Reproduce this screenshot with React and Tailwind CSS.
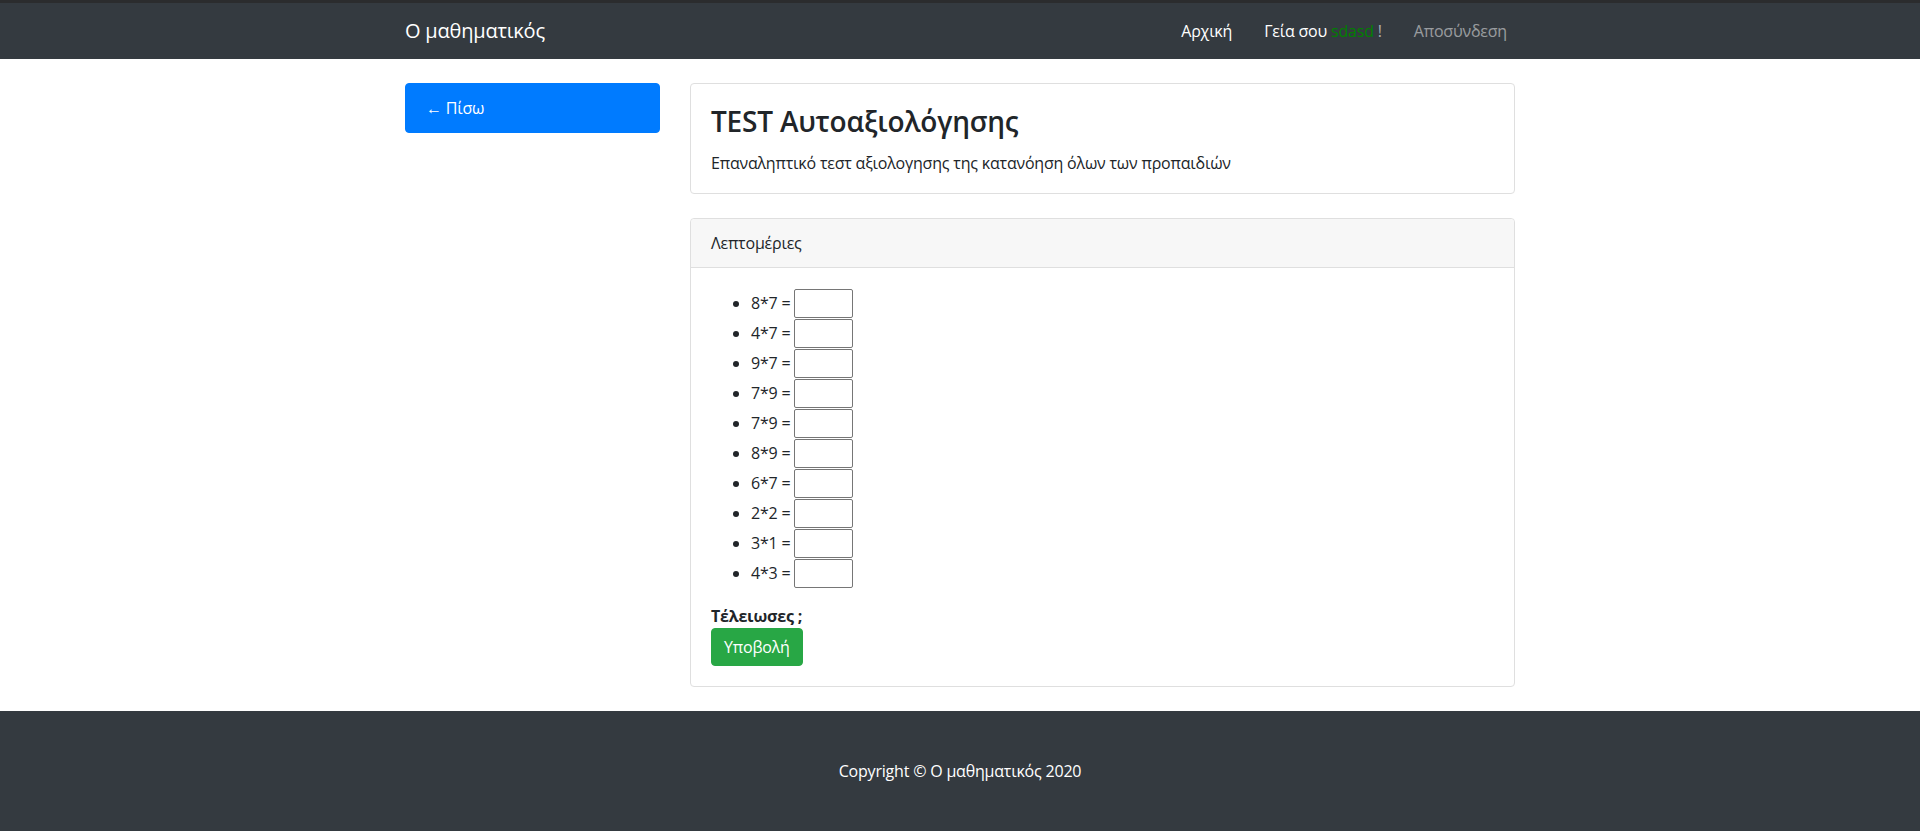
import React from "react";

const questions = ["8*7", "4*7", "9*7", "7*9", "7*9", "8*9", "6*7", "2*2", "3*1", "4*3"];

const App = () => {
  return (
    <div
      className="min-h-screen bg-white text-[16px] leading-[24px] text-[#212529] tracking-[-0.2px]"
      style={{ fontFamily: '"Open Sans", "Noto Sans", sans-serif' }}
    >
      {/* Navbar */}
      <nav className="bg-[#343a40] border-t-[3px] border-[#2b2c2e]">
        <div className="mx-auto w-[1140px] px-[15px] h-[56px] flex items-center justify-between">
          <span className="text-white text-[20px] leading-[30px]">Ο μαθηματικός</span>
          <ul className="flex items-center">
            <li className="px-2 text-white">Αρχική</li>
            <li className="px-2 ml-4 text-white">
              Γεία σου <span className="text-[#008000]">sdasd</span>{" "}
              <span className="text-white/60">!</span>
            </li>
            <li className="px-2 ml-4 text-white/50">Αποσύνδεση</li>
          </ul>
        </div>
      </nav>

      {/* Main */}
      <div className="mx-auto w-[1140px] px-[15px] mt-6 flex gap-[30px]">
        <div className="w-[255px] shrink-0">
          <div className="bg-[#007bff] text-white rounded-[4px] px-5 py-3 border border-[#007bff]">
            ← Πίσω
          </div>
        </div>

        <div className="flex-1 flex flex-col gap-6">
          <div className="border border-[#dfdfdf] rounded-[4px] px-5 pt-5 pb-[18px]">
            <h3 className="text-[28px] leading-[34px] font-semibold mb-[13px]">TEST Αυτοαξιολόγησης</h3>
            <p>Επαναληπτικό τεστ αξιολογησης της κατανόηση όλων των προπαιδιών</p>
          </div>

          <div className="border border-[#dfdfdf] rounded-[4px]">
            <div className="bg-[#f7f7f7] border-b border-[#dfdfdf] px-5 py-3 rounded-t-[4px]">
              Λεπτομέριες
            </div>
            <div className="p-5">
              <ul className="list-disc pl-10 mb-4">
                {questions.map((q, i) => (
                  <li key={i} className="h-[30px] leading-[30px]">
                    <span className="inline-flex items-center h-[30px] align-top">
                      {q} =&nbsp;
                      <input
                        type="text"
                        className="w-[59px] h-[29px] border border-[#767676] rounded-[2px] bg-white"
                      />
                    </span>
                  </li>
                ))}
              </ul>
              <b className="block font-bold">Τέλειωσες ;</b>
              <button className="bg-[#28a745] text-white rounded-[4px] px-3 py-1.5 border border-[#28a745] leading-[24px]">
                Υποβολή
              </button>
            </div>
          </div>
        </div>
      </div>

      {/* Footer */}
      <footer className="mt-6 bg-[#343a40] py-12 text-center text-white">
        Copyright © Ο μαθηματικός 2020
      </footer>
    </div>
  );
};

export default App;
